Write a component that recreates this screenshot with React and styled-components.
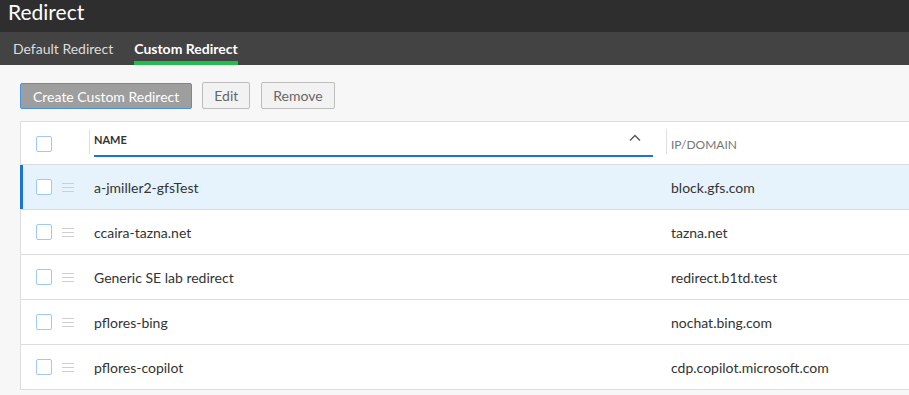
import React from "react";
import styled, { createGlobalStyle } from "styled-components";

const Global = createGlobalStyle`
  html, body { margin: 0; padding: 0; }
  body {
    font-family: Lato, "Open Sans", sans-serif;
    background: #f7f7f7;
    overflow: hidden;
    width: 909px;
    height: 395px;
  }
`;

const Page = styled.div`
  display: flex;
  flex-direction: column;
  width: 909px;
  height: 395px;
  overflow: hidden;
`;

const TitleBar = styled.div`
  height: 32px;
  background: #2e2e2e;
  color: #fff;
  font-size: 21px;
  line-height: 24px;
  padding: 0 8px;
  display: flex;
  align-items: flex-start;
`;

const TabBar = styled.div`
  height: 33px;
  background: #434343;
  display: flex;
  align-items: stretch;
  padding-left: 13px;
  gap: 21px;
`;

const Tab = styled.div`
  display: flex;
  align-items: center;
  font-size: 14px;
  color: ${(p) => (p.$active ? "#fff" : "#ddd")};
  font-weight: ${(p) => (p.$active ? 700 : 400)};
  border-bottom: 4px solid ${(p) => (p.$active ? "#1fbf4f" : "transparent")};
  padding-top: 4px;
  box-sizing: border-box;
`;

const Content = styled.div`
  flex: 1;
  padding: 17px 0 0 20px;
  display: flex;
  flex-direction: column;
`;

const Toolbar = styled.div`
  display: flex;
  gap: 10px;
  align-items: flex-start;
  margin-bottom: 12px;
`;

const Button = styled.button`
  box-sizing: border-box;
  font-family: Lato, sans-serif;
  font-size: 14px;
  border-radius: 2px;
  padding: ${(p) => (p.$primary ? "0 12px" : "0 11px")};
  cursor: pointer;
  background: ${(p) => (p.$primary ? "#9e9e9e" : "#f2f2f2")};
  color: ${(p) => (p.$primary ? "#fff" : "#666")};
  border: 1px solid ${(p) => (p.$primary ? "#4a90e2" : "#bdbdbd")};
  margin-top: ${(p) => (p.$primary ? "1px" : "0")};
  margin-left: ${(p) => (p.$gapExtra ? "1px" : "0")};
  height: ${(p) => (p.$primary ? "26px" : "27px")};
`;

const Table = styled.div`
  width: 1000px;
  background: #fff;
  border-top: 1px solid #dcdcdc;
  border-left: 1px solid #dcdcdc;
  display: flex;
  flex-direction: column;
`;

const HeaderRow = styled.div`
  height: 42px;
  display: flex;
  align-items: stretch;
  border-bottom: 1px solid #dcdcdc;
`;

const Row = styled.div`
  height: 44px;
  display: flex;
  align-items: center;
  border-bottom: 1px solid #dcdcdc;
  background: ${(p) => (p.$selected ? "#e6f3fd" : "#fff")};
  box-shadow: ${(p) => (p.$selected ? "inset 3px 0 0 #1a73d6" : "none")};
  margin-left: ${(p) => (p.$selected ? "-1px" : "0")};
  padding-left: ${(p) => (p.$selected ? "1px" : "0")};
`;

const SelectCell = styled.div`
  width: 68px;
  display: flex;
  align-items: center;
  padding-left: 15px;
  box-sizing: border-box;
  gap: 10px;
`;

const HeaderSelect = styled(SelectCell)`
  padding-top: 2px;
`;

const Checkbox = styled.span`
  width: 16px;
  height: 16px;
  box-sizing: border-box;
  border: 1px solid #9ec9f0;
  border-radius: 2px;
  background: #fff;
  display: inline-block;
  flex-shrink: 0;
`;

const Handle = styled.span`
  width: 12px;
  height: 9px;
  display: flex;
  flex-direction: column;
  justify-content: space-between;
  & > i {
    display: block;
    height: 1px;
    background: #cfcfcf;
  }
`;

const HeadDivider = styled.div`
  width: 1px;
  background: #dedede;
  margin: 7px 0 10px;
`;

const NameHead = styled.div`
  width: 559px;
  margin-left: 4px;
  margin-right: 13px;
  display: flex;
  align-items: center;
  justify-content: space-between;
  border-bottom: 2px solid #1a73d6;
  margin-bottom: 7px;
  font-size: 11px;
  font-weight: 700;
  color: #333;
  padding-top: 2px;
  box-sizing: border-box;
`;

const Chevron = styled.svg`
  width: 14px;
  height: 14px;
  margin-right: 11px;
  margin-top: -4px;
`;

const IpHead = styled.div`
  margin-left: 4px;
  display: flex;
  align-items: center;
  font-size: 12px;
  color: #777;
  padding-top: 2px;
`;

const NameCell = styled.div`
  width: 578px;
  padding-left: 5px;
  font-size: 14px;
  color: #333;
  box-sizing: border-box;
`;

const IpCell = styled.div`
  font-size: 14px;
  color: #333;
  padding-left: 4px;
`;

const rows = [
  ["a-jmiller2-gfsTest", "block.gfs.com"],
  ["ccaira-tazna.net", "tazna.net"],
  ["Generic SE lab redirect", "redirect.b1td.test"],
  ["pflores-bing", "nochat.bing.com"],
  ["pflores-copilot", "cdp.copilot.microsoft.com"],
];

export default function App() {
  return (
    <Page>
      <Global />
      <TitleBar>Redirect</TitleBar>
      <TabBar>
        <Tab>Default Redirect</Tab>
        <Tab $active>Custom Redirect</Tab>
      </TabBar>
      <Content>
        <Toolbar>
          <Button $primary>Create Custom Redirect</Button>
          <Button>Edit</Button>
          <Button $gapExtra>Remove</Button>
        </Toolbar>
        <Table>
          <HeaderRow>
            <HeaderSelect>
              <Checkbox />
            </HeaderSelect>
            <HeadDivider />
            <NameHead>
              <span>NAME</span>
              <Chevron viewBox="0 0 14 14" fill="none" stroke="#555" strokeWidth="1.4">
                <path d="M2 9.5 L7 4.5 L12 9.5" />
              </Chevron>
            </NameHead>
            <HeadDivider />
            <IpHead>IP/DOMAIN</IpHead>
          </HeaderRow>
          {rows.map(([name, ip], i) => (
            <Row key={name} $selected={i === 0}>
              <SelectCell>
                <Checkbox />
                <Handle>
                  <i />
                  <i />
                  <i />
                </Handle>
              </SelectCell>
              <NameCell>{name}</NameCell>
              <IpCell>{ip}</IpCell>
            </Row>
          ))}
        </Table>
      </Content>
    </Page>
  );
}
